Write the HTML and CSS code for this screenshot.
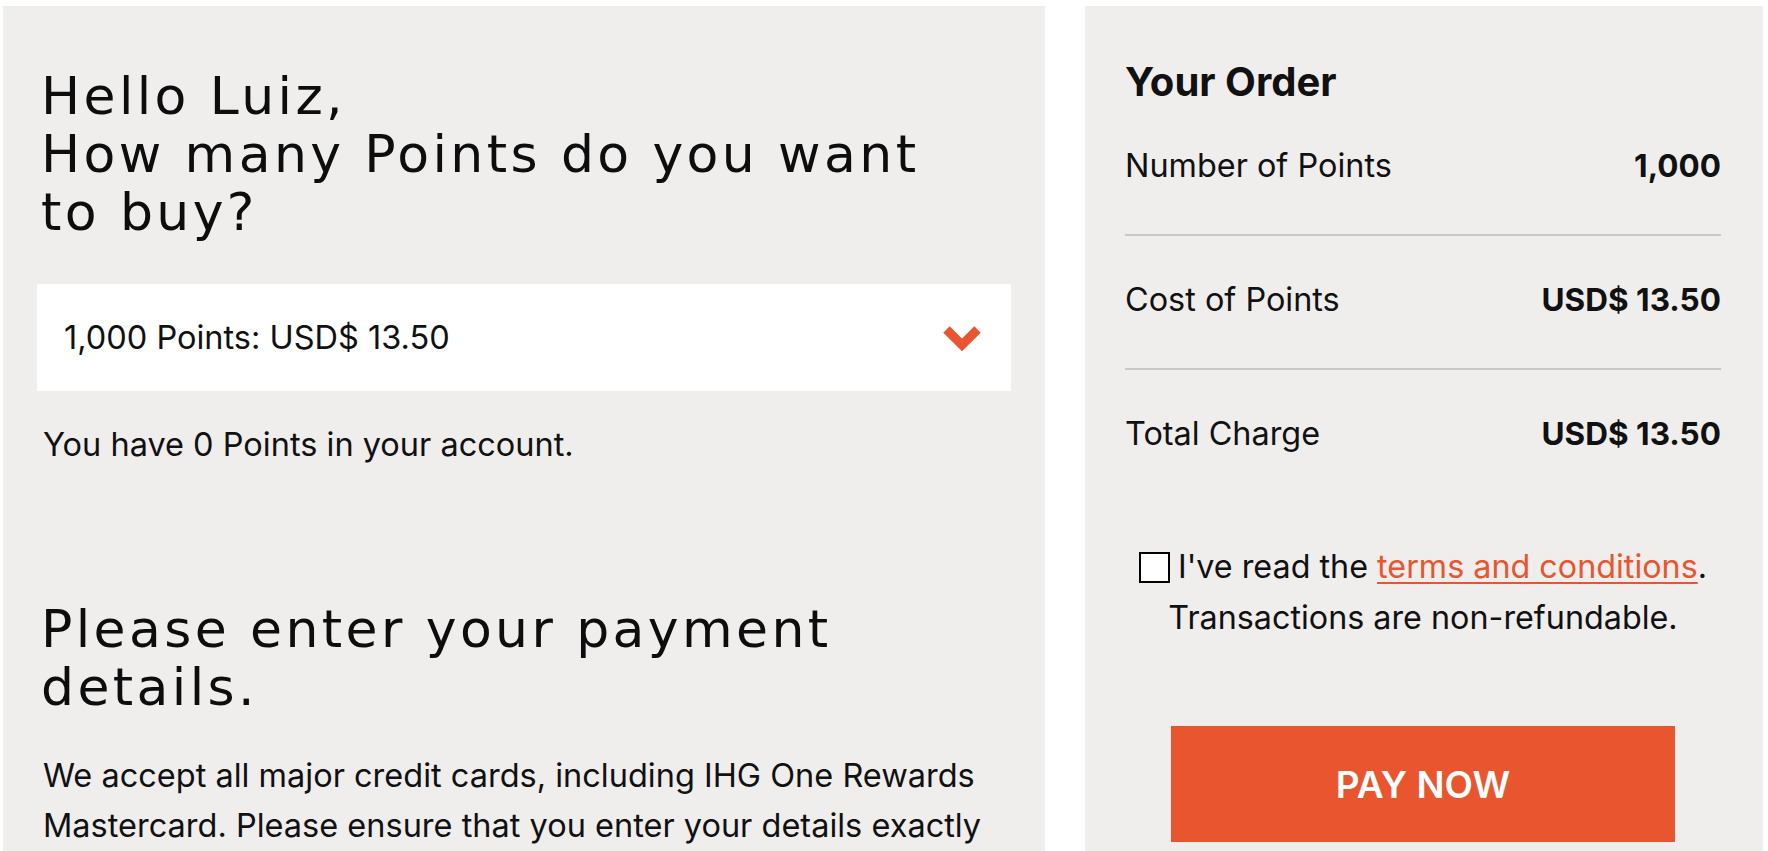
FILE: index.html
```html
<!DOCTYPE html>
<html lang="en">
<head>
<meta charset="utf-8">
<title>Buy Points</title>
<link rel="stylesheet" href="styles.css">
</head>
<body>
<div class="page">
  <main class="panel main-panel">
    <h1 class="title">Hello Luiz,<br>How many Points do you want to buy?</h1>
    <div class="select">
      <span class="select-value">1,000 Points: USD$ 13.50</span>
      <svg class="chevron" width="38" height="26" viewBox="0 0 38 26" aria-hidden="true">
        <path d="M3.5 3.5 L19 19 L34.5 3.5" fill="none" stroke="#e8552e" stroke-width="9" stroke-linecap="butt" stroke-linejoin="miter"/>
      </svg>
    </div>
    <p class="balance">You have 0 Points in your account.</p>
    <h2 class="title title-payment">Please enter your payment details.</h2>
    <p class="copy">We accept all major credit cards, including IHG One Rewards Mastercard. Please ensure that you enter your details exactly as they appear on your card.</p>
  </main>
  <aside class="panel order-panel">
    <h2 class="order-title">Your Order</h2>
    <div class="order-row">
      <span>Number of Points</span>
      <strong>1,000</strong>
    </div>
    <div class="order-row">
      <span>Cost of Points</span>
      <strong>USD$ 13.50</strong>
    </div>
    <div class="order-row last">
      <span>Total Charge</span>
      <strong>USD$ 13.50</strong>
    </div>
    <p class="terms"><span class="checkbox"></span>I've read the <a href="#">terms and conditions</a>. Transactions are non-refundable.</p>
    <button class="pay" type="button">PAY NOW</button>
  </aside>
</div>
</body>
</html>
```
FILE: styles.css
```css
html, body {
  margin: 0;
  padding: 0;
  background: #ffffff;
}
body {
  font-family: Inter, Roboto, "Liberation Sans", sans-serif;
  color: #111111;
  overflow: hidden;
}
.page {
  display: flex;
  gap: 40px;
  padding: 6px 0 0 3px;
  height: 845px;
}
.panel {
  background: #efeeed;
  box-sizing: border-box;
}
.main-panel {
  width: 1042px;
  padding: 61px 34px 0;
}
.title {
  margin: 0;
  padding: 0 4px;
  max-width: 920px;
  font-family: "DejaVu Sans", sans-serif;
  font-weight: 400;
  font-size: 52px;
  line-height: 58px;
  letter-spacing: 3.4px;
  color: #0d0d0d;
}
.select {
  margin-top: 43px;
  height: 107px;
  background: #ffffff;
  display: flex;
  align-items: center;
  justify-content: space-between;
  padding: 0 30px 0 27px;
}
.select-value {
  font-size: 32.5px;
  line-height: 36px;
  padding-top: 1px;
}
.chevron {
  display: block;
  margin-top: 2px;
}
.balance {
  margin: 36px 0 0;
  padding: 0 6px;
  font-size: 32.5px;
  line-height: 36px;
}
.title-payment {
  margin-top: 137px;
}
.copy {
  margin: 35px 0 0;
  padding: 0 6px;
  font-size: 32.5px;
  line-height: 49.5px;
}
.order-panel {
  width: 678px;
  padding: 56px 42px 0 40px;
}
.order-title {
  margin: 0;
  font-size: 40px;
  line-height: 40px;
  font-weight: 700;
}
.order-row {
  display: flex;
  justify-content: space-between;
  align-items: baseline;
  font-size: 32.4px;
  line-height: 40px;
  padding: 44px 0 48px;
  border-bottom: 2px solid #c9c8c7;
}
.order-row strong {
  font-weight: 700;
  font-size: 31.5px;
}
.order-row.last {
  border-bottom: 0;
}
.terms {
  margin: 39px -10px 0;
  text-align: center;
  font-size: 32.3px;
  line-height: 51px;
  padding: 0;
}
.checkbox {
  display: inline-block;
  box-sizing: border-box;
  width: 31px;
  height: 31px;
  border: 2px solid #000;
  background: #fff;
  vertical-align: -5px;
  margin-right: 8px;
}
.terms a {
  color: #e8552e;
  text-decoration: underline;
  text-underline-offset: 4px;
  text-decoration-thickness: 2px;
}
.pay {
  display: block;
  margin: 83px auto 0;
  width: 504px;
  height: 116px;
  border: 0;
  background: #e8552e;
  color: #ffffff;
  font-family: Inter, Roboto, sans-serif;
  font-weight: 600;
  font-size: 37px;
}
```
